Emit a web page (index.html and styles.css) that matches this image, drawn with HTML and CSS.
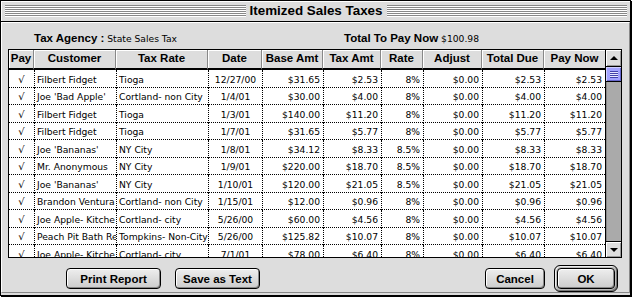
FILE: index.html
```html
<!DOCTYPE html>
<html>
<head>
<meta charset="utf-8">
<title>Itemized Sales Taxes</title>
<link rel="stylesheet" href="styles.css">
</head>
<body>
<div class="window">
  <div class="titlebar">
    <div class="stripes"></div>
    <div class="title">Itemized Sales Taxes</div>
    <div class="stripes"></div>
  </div>
  <div class="content">
    <div class="info">
      <div class="agency"><span class="label">Tax Agency :</span> State Sales Tax</div>
      <div class="total"><span class="label">Total To Pay Now</span> $100.98</div>
    </div>
    <div class="tablebox">
      <div class="grid">
        <div class="hd">Pay</div><div class="hd">Customer</div><div class="hd">Tax Rate</div><div class="hd">Date</div><div class="hd">Base Amt</div><div class="hd">Tax Amt</div><div class="hd">Rate</div><div class="hd">Adjust</div><div class="hd">Total Due</div><div class="hd">Pay Now</div>

        <div class="c ck">√</div><div class="c l">Filbert Fidget</div><div class="c l">Tioga</div><div class="c m">12/27/00</div><div class="c r">$31.65</div><div class="c r">$2.53</div><div class="c r">8%</div><div class="c r">$0.00</div><div class="c r">$2.53</div><div class="c r">$2.53</div>

        <div class="c ck">√</div><div class="c l">Joe 'Bad Apple'</div><div class="c l">Cortland- non City</div><div class="c m">1/4/01</div><div class="c r">$30.00</div><div class="c r">$4.00</div><div class="c r">8%</div><div class="c r">$0.00</div><div class="c r">$4.00</div><div class="c r">$4.00</div>

        <div class="c ck">√</div><div class="c l">Filbert Fidget</div><div class="c l">Tioga</div><div class="c m">1/3/01</div><div class="c r">$140.00</div><div class="c r">$11.20</div><div class="c r">8%</div><div class="c r">$0.00</div><div class="c r">$11.20</div><div class="c r">$11.20</div>

        <div class="c ck">√</div><div class="c l">Filbert Fidget</div><div class="c l">Tioga</div><div class="c m">1/7/01</div><div class="c r">$31.65</div><div class="c r">$5.77</div><div class="c r">8%</div><div class="c r">$0.00</div><div class="c r">$5.77</div><div class="c r">$5.77</div>

        <div class="c ck">√</div><div class="c l">Joe 'Bananas'</div><div class="c l">NY City</div><div class="c m">1/8/01</div><div class="c r">$34.12</div><div class="c r">$8.33</div><div class="c r">8.5%</div><div class="c r">$0.00</div><div class="c r">$8.33</div><div class="c r">$8.33</div>

        <div class="c ck">√</div><div class="c l">Mr. Anonymous</div><div class="c l">NY City</div><div class="c m">1/9/01</div><div class="c r">$220.00</div><div class="c r">$18.70</div><div class="c r">8.5%</div><div class="c r">$0.00</div><div class="c r">$18.70</div><div class="c r">$18.70</div>

        <div class="c ck">√</div><div class="c l">Joe 'Bananas'</div><div class="c l">NY City</div><div class="c m">1/10/01</div><div class="c r">$120.00</div><div class="c r">$21.05</div><div class="c r">8.5%</div><div class="c r">$0.00</div><div class="c r">$21.05</div><div class="c r">$21.05</div>

        <div class="c ck">√</div><div class="c l">Brandon Ventura</div><div class="c l">Cortland- non City</div><div class="c m">1/15/01</div><div class="c r">$12.00</div><div class="c r">$0.96</div><div class="c r">8%</div><div class="c r">$0.00</div><div class="c r">$0.96</div><div class="c r">$0.96</div>

        <div class="c ck">√</div><div class="c l">Joe Apple- Kitche</div><div class="c l">Cortland- city</div><div class="c m">5/26/00</div><div class="c r">$60.00</div><div class="c r">$4.56</div><div class="c r">8%</div><div class="c r">$0.00</div><div class="c r">$4.56</div><div class="c r">$4.56</div>

        <div class="c ck">√</div><div class="c l">Peach Pit Bath Re</div><div class="c l">Tompkins- Non-City</div><div class="c m">5/26/00</div><div class="c r">$125.82</div><div class="c r">$10.07</div><div class="c r">8%</div><div class="c r">$0.00</div><div class="c r">$10.07</div><div class="c r">$10.07</div>

        <div class="c ck">√</div><div class="c l">Joe Apple- Kitche</div><div class="c l">Cortland- city</div><div class="c m">7/1/01</div><div class="c r">$78.00</div><div class="c r">$6.40</div><div class="c r">8%</div><div class="c r">$0.00</div><div class="c r">$6.40</div><div class="c r">$6.40</div>
      </div>
      <div class="scroll">
        <div class="arrow up"><span class="tri-up"></span></div>
        <div class="track"><div class="thumb"><span class="grip"></span></div></div>
        <div class="arrow down"><span class="tri-down"></span></div>
      </div>
    </div>
    <div class="buttons">
      <button class="btn w-print">Print Report</button>
      <button class="btn w-save">Save as Text</button>
      <div class="spacer"></div>
      <button class="btn w-cancel">Cancel</button>
      <div class="default"><button class="btn w-ok">OK</button></div>
    </div>
  </div>
</div>
</body>
</html>
```

FILE: styles.css
```css
* { box-sizing: border-box; margin: 0; padding: 0; }
html, body { background: #ffffff; }
body {
  width: 632px;
  height: 297px;
  overflow: hidden;
  font-family: "DejaVu Sans", sans-serif;
  color: #000;
}

.window {
  width: 631px;
  height: 296px;
  border: 1px solid #000;
  box-shadow: 1px 1px 0 #000;
  background: #dddddd;
  display: flex;
  flex-direction: column;
  padding-bottom: 2px;
}

.titlebar {
  height: 21px;
  flex: none;
  border-bottom: 1px solid #000;
  background: #dddddd;
  box-shadow: inset 1px 1px 0 #fff;
  display: flex;
  align-items: flex-start;
  padding: 4px 3px 0 4px;
}
.stripes {
  flex: 1;
  height: 12px;
  background: repeating-linear-gradient(to bottom, #888888 0 1px, #ffffff 1px 2px);
}
.title {
  font: bold 13.4px "Liberation Sans", Arial, sans-serif;
  line-height: 12px;
  padding: 0 4px 0 4px;
  white-space: nowrap;
}

.content {
  flex: 1;
  border-top: 1px solid #fff;
  border-left: 1px solid #fff;
  border-right: 1px solid #888;
  border-bottom: 1px solid #888;
  padding: 9px 0 0 6px;
  display: flex;
  flex-direction: column;
}

.info {
  display: flex;
  height: 14px;
  line-height: 14px;
  font-size: 9.2px;
  white-space: nowrap;
}
.agency { margin-left: 26px; width: 310px; }
.label { font: bold 11.5px "Liberation Sans", Arial, sans-serif; }

.tablebox {
  margin-top: 3px;
  width: 614px;
  height: 209px;
  border: 1px solid #000;
  display: flex;
  background: #fff;
}

.grid {
  width: 596px;
  height: 207px;
  overflow: hidden;
  display: grid;
  grid-template-columns: 25px 82px 92px 54px 61px 58px 42px 59px 62px 61px;
  grid-template-rows: 20px;
  grid-auto-rows: 17.5px;
  align-content: start;
}

.hd {
  background: #dddddd;
  border-bottom: 2px solid #000;
  border-right: 1px solid #888;
  box-shadow: inset 1px 1px 0 #fff;
  font: bold 11.5px "Liberation Sans", Arial, sans-serif;
  line-height: 17px;
  text-align: center;
  white-space: nowrap;
  overflow: hidden;
}
.hd:nth-child(10) { border-right: none; }

.c {
  font-size: 9.2px;
  line-height: 14px;
  padding-top: 2.5px;
  border-bottom: 1px dotted #000;
  border-left: 1px dotted #000;
  white-space: nowrap;
  overflow: hidden;
}
.c.ck { border-left: none; text-align: center; font-size: 10px; }
.c.l { padding-left: 2px; }
.c.m { text-align: center; }
.c.r { text-align: right; padding-right: 3px; }

.scroll {
  width: 16px;
  border-left: 1px solid #000;
  display: flex;
  flex-direction: column;
  background: #aaaaaa;
}
.arrow {
  height: 17px;
  flex: none;
  background: #dddddd;
  box-shadow: inset 1px 1px 0 #fff, inset -1px -1px 0 #999;
  display: flex;
  align-items: center;
  justify-content: center;
}
.arrow.up { border-bottom: 1px solid #000; }
.arrow.down { border-top: 1px solid #000; height: 16px; }
.tri-up {
  width: 0; height: 0;
  border-left: 4px solid transparent;
  border-right: 4px solid transparent;
  border-bottom: 4px solid #000;
}
.tri-down {
  width: 0; height: 0;
  border-left: 4px solid transparent;
  border-right: 4px solid transparent;
  border-top: 4px solid #000;
}
.track {
  flex: 1;
  background: #aaaaaa;
  box-shadow: inset 1px 0 0 #888;
}
.thumb {
  height: 15px;
  background: #a3a3ff;
  border-bottom: 1px solid #000;
  box-shadow: inset 1px 1px 0 #d0d0ff, inset -1px -1px 0 #6666cc;
  display: flex;
  align-items: center;
  justify-content: center;
}
.grip {
  width: 8px;
  height: 7px;
  background: repeating-linear-gradient(to bottom, #4444aa 0 1px, #e8e8ff 1px 2px);
}

.buttons {
  margin-top: 7px;
  height: 27px;
  display: flex;
  align-items: center;
  padding-left: 58px;
  padding-right: 11px;
}
.spacer { flex: 1; }
.btn {
  height: 21px;
  border: 1px solid #000;
  border-radius: 4px;
  background: linear-gradient(#eeeeee, #cccccc);
  box-shadow: inset 1px 1px 0 #fff, inset -1px -1px 0 #888;
  font: bold 11.5px "Liberation Sans", Arial, sans-serif;
  color: #000;
  padding: 0;
}
.w-print { width: 95px; }
.w-save { width: 85px; margin-left: 14px; }
.w-cancel { width: 60px; margin-right: 9px; }
.w-ok { width: 58px; }
.default {
  padding: 2px;
  border: 1px solid #000;
  border-radius: 6px;
  background: #bbbbbb;
  box-shadow: inset 1px 1px 0 #eee, inset -1px -1px 0 #777;
  display: flex;
}
```
